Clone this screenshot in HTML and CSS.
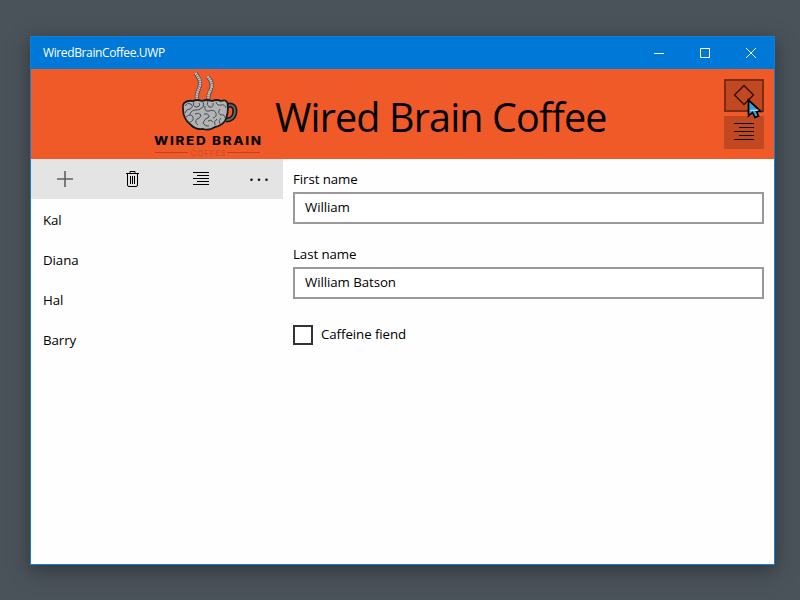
FILE: index.html
```html
<!DOCTYPE html>
<html lang="en">
<head>
<meta charset="utf-8">
<title>WiredBrainCoffee.UWP</title>
<link rel="stylesheet" href="styles.css">
</head>
<body>
<main class="window">
  <div class="titlebar">
    <span class="caption">WiredBrainCoffee.UWP</span>
    <svg class="sys" viewBox="0 0 46 32"><path d="M18 16.5h10"/></svg>
    <svg class="sys" viewBox="0 0 46 32"><path d="M18.5 11.5h9v9h-9z"/></svg>
    <svg class="sys" viewBox="0 0 46 32"><path d="M18 11l10 10M28 11l-10 10"/></svg>
  </div>
  <header class="header">
    <svg class="logo" viewBox="150 69 116 90">
      <g class="steam-edge"><path d="M195.500 73C198 77 201 80 200 85C199 90 196 93 197 99"/><path d="M207.500 76.500C211 80 213 84 211 89C209 93 208 95 208.500 99"/></g>
      <g class="steam"><path d="M195.500 73C198 77 201 80 200 85C199 90 196 93 197 99"/><path d="M207.500 76.500C211 80 213 84 211 89C209 93 208 95 208.500 99"/></g>
      <path class="handle-edge" d="M227 106C233 103 236 108 234.500 114C233.500 118 231 120 226 120"/>
      <path class="handle" d="M227 106C233 103 236 108 234.500 114C233.500 118 231 120 226 120"/>
      <path class="brain" d="M184 103Q188 100 193 101Q197 99 202 101Q207 99 212 101Q217 99 221 101Q226 99 227.500 103Q229 113 225 121Q221 126 215 127Q209 131 203 129Q196 130 191 125Q183 119 183 109Q182.500 105 184 103Z"/>
      <g class="folds">
        <path d="M185 106Q187 102 191 104Q194 107 190 109Q186 109 185 113"/>
        <path d="M194 102Q192 106 196 107Q201 107 199 103M202 101Q205 104 203 107Q199 111 195 110Q190 111 190 115"/>
        <path d="M208 101Q206 105 209 107Q214 108 213 103M216 102Q217 106 221 105Q225 104 226 108"/>
        <path d="M186 117Q191 113 193 117Q194 121 190 122M195 114Q199 112 201 115Q200 119 197 119Q194 122 198 125"/>
        <path d="M205 106Q204 112 209 111Q214 109 216 113Q217 117 213 118"/>
        <path d="M220 109Q217 113 221 115Q225 114 225 118M204 114Q209 113 209 117Q204 119 203 123Q205 127 209 126"/>
        <path d="M217 119Q213 122 215 125M221 118Q218 120 220 124M208 121Q211 119 213 122"/>
      </g>
      <text class="brand" transform="translate(154 145) scale(1.17 1)" textLength="91.500" lengthAdjust="spacing">WIRED BRAIN</text>
      <path class="rule" d="M155 152.500h33M227 152.500h33"/>
      <text class="brand-sub" x="190.500" y="155.500" textLength="35" lengthAdjust="spacing">COFFEE</text>
    </svg>
    <h1 class="title">Wired Brain Coffee</h1>
    <div class="actions">
      <button class="action hovered" aria-label="Theme"><svg viewBox="0 0 36 29"><path class="diamond" d="M18 4.500L27.500 14L18 23.500L8.500 14Z"/></svg></button>
      <button class="action" aria-label="Move"><svg viewBox="0 0 36 29"><path d="M8 5.500h20M13 9.500h15M8 13.500h20M13 17.500h15M8 21.500h20"/></svg></button>
      <svg class="cursor" viewBox="0 0 16 22"><path d="M1.500 2v16L5.500 14.500L8 19.500L11.500 18L9.500 13.500H14Z"/><path class="glint" d="M3 12L12 11.500L10 13H3Z"/></svg>
    </div>
  </header>
  <div class="content">
    <section class="sidebar">
      <div class="commands">
        <svg class="command" viewBox="0 0 68 40"><path class="plus" d="M26 20h16M34 12v16"/></svg>
        <svg class="command" viewBox="0 0 68 40"><path d="M27 14.500h13M31 14v-1.500h5V14M28.500 15v11q0 1.500 1.500 1.500h7q1.500 0 1.500-1.500V15M31.500 17v8M33.500 17v8M35.500 17v8"/></svg>
        <svg class="command" viewBox="0 0 68 40"><path d="M26 13.500h16M30 16.500h12M26 19.500h16M30 22.500h12M26 25.500h16"/></svg>
        <svg class="more" viewBox="0 0 48 40"><circle cx="16.500" cy="20.800" r="1.300"/><circle cx="24" cy="20.800" r="1.300"/><circle cx="31.500" cy="20.800" r="1.300"/></svg>
      </div>
      <ul class="people">
        <li>Kal</li><li>Diana</li><li>Hal</li><li>Barry</li>
      </ul>
    </section>
    <form class="details">
      <label class="field"><span class="label">First name</span><input type="text" value="William"></label>
      <label class="field"><span class="label">Last name</span><input type="text" value="William Batson"></label>
      <label class="check"><span class="box"></span><span class="check-text">Caffeine fiend</span></label>
    </form>
  </div>
</main>
</body>
</html>
```
FILE: styles.css
```css
* { box-sizing: border-box; }
body {
  margin: 0;
  height: 600px;
  padding: 36px 25px 35px 30px;
  overflow: hidden;
  background: #4b535a;
  color: #000;
  font: 13.3px/20px "Open Sans", "Noto Sans", sans-serif;
  letter-spacing: -.08px;
}
.window {
  height: 529px;
  border: 1px solid #0f7fdb;
  background: #fefefe;
  box-shadow: 0 5px 18px rgba(30, 38, 38, .65);
}
.titlebar {
  display: flex;
  height: 32px;
  background: #0078d7;
  color: #fff;
  font-size: 12px;
  line-height: 32px;
}
.caption { flex: 1; padding-left: 12px; letter-spacing: -.38px; }
.sys { width: 46px; height: 32px; fill: none; stroke: #fff; stroke-width: 1; }
.header { display: flex; height: 90px; background: #f05a29; }
.logo { width: 116px; height: 90px; margin-left: 119px; fill: none; }
.steam-edge { stroke: #5a4a45; stroke-width: 4.200; }
.steam { stroke: #c5c3c1; stroke-width: 2.600; stroke-dasharray: 1.700 .5; }
.handle-edge { stroke: #17191b; stroke-width: 5; }
.handle { stroke: #66676a; stroke-width: 1.800; }
.brain { fill: #b1b3b5; stroke: #17191b; stroke-width: 1.800; }
.folds { stroke: #3e4043; stroke-width: .9; }
.brand { fill: #080808; font: 800 11.500px Inter, sans-serif; }
.brand-sub { fill: #c9502b; font: 400 8px Inter, sans-serif; }
.rule { stroke: #a94124; stroke-width: .8; }
.title {
  margin: 0 0 0 9px;
  font-size: 39.500px;
  font-weight: 400;
  line-height: 96px;
  letter-spacing: -.85px;
  white-space: nowrap;
}
.actions {
  position: relative;
  display: flex;
  flex-direction: column;
  gap: 4px;
  margin: 10px 10px 0 auto;
}
.action {
  width: 40px;
  height: 33px;
  padding: 0;
  border: 2px solid transparent;
  background: #c14821;
}
.hovered { border-color: #792d15; }
.action svg { display: block; width: 36px; height: 29px; fill: none; stroke: #080302; }
.diamond { stroke: #2c1008; stroke-width: 1.300; }
.cursor {
  position: absolute;
  left: 23px;
  top: 19px;
  width: 16px;
  height: 22px;
  fill: #399fe0;
  stroke: #000;
  stroke-width: 1.700;
}
.cursor .glint { fill: #bad2e8; stroke: none; }
.content { display: flex; height: 405px; }
.sidebar { width: 252px; }
.commands { display: flex; height: 40px; background: #e4e4e4; }
.command { width: 68px; height: 40px; fill: none; stroke: #000; }
.plus { stroke: #606060; stroke-width: 1.600; }
.more { width: 48px; height: 40px; fill: #111; }
.people { margin: 0; padding: 1px 0 0 12px; list-style: none; }
.people li { height: 40px; line-height: 40px; }
.details { flex: 1; padding: 10px 10px 0; }
.field { display: block; height: 75px; }
.label { display: block; height: 23px; line-height: 21px; }
input {
  display: block;
  width: 100%;
  height: 32px;
  padding: 0 10px 2px;
  border: 2px solid #999;
  border-radius: 0;
  outline: 0;
  background: #fff;
  color: #000;
  font: inherit;
  letter-spacing: inherit;
}
.check { display: flex; gap: 8px; padding-top: 6px; }
.check-text { line-height: 19px; }
.box { width: 20px; height: 20px; border: 2px solid #333; background: #fff; }
```
